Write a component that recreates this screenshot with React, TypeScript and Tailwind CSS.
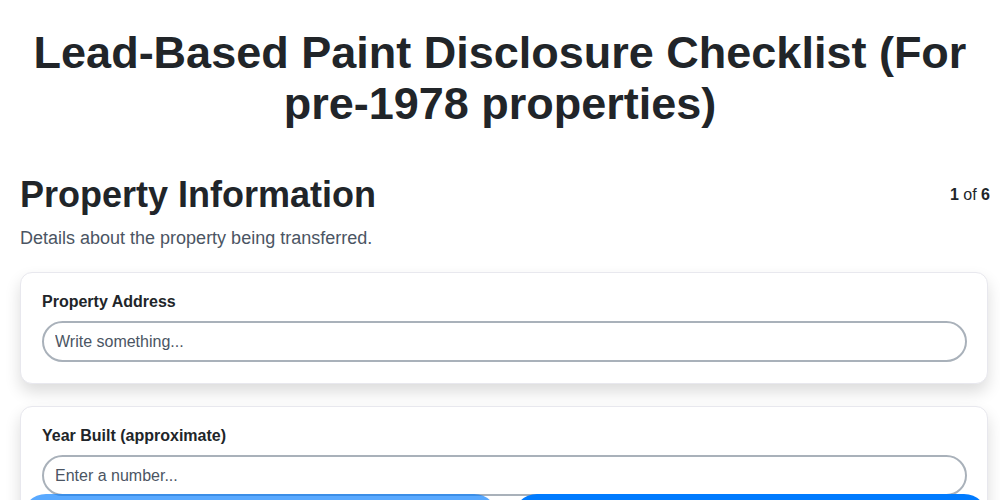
const fields = [
  { label: "Property Address", placeholder: "Write something...", type: "text" },
  { label: "Year Built (approximate)", placeholder: "Enter a number...", type: "number" },
];

export default function App() {
  return (
    <div className="min-h-screen bg-white text-[#212529] font-['Liberation_Sans',Arial,sans-serif]">
      <h1 className="pt-[27px] px-5 text-center text-[45px] leading-[51px] font-bold">
        Lead-Based Paint Disclosure Checklist (For pre-1978 properties)
      </h1>

      <div className="pl-5 pr-[10px] mt-[44px] pb-24">
        {/* Step header */}
        <div className="flex items-center justify-between">
          <h2 className="text-[36px] leading-[43px] font-bold">Property Information</h2>
          <p className="text-base leading-6">
            <span className="font-bold">1</span> of <span className="font-bold">6</span>
          </p>
        </div>
        <p className="mt-[9px] text-[18px] leading-[27px] text-[#4b5563]">
          Details about the property being transferred.
        </p>

        {/* Fields */}
        <div className="mt-[20px] mr-[2px] flex flex-col gap-[22px]">
          {fields.map((f) => (
            <div
              key={f.label}
              className="rounded-xl border border-[#e8e8ee] bg-white pl-[21px] pr-[20px] pt-[17px] pb-[21px] shadow-[0_8px_16px_rgba(0,0,0,0.14)]"
            >
              <label className="block text-base leading-6 font-bold mb-[7px]">{f.label}</label>
              <input
                type={f.type}
                placeholder={f.placeholder}
                className="block w-full h-[41px] rounded-full border-2 border-[#a9b1ba] bg-white px-[11px] text-base outline-none placeholder:text-[#4b5563]"
              />
            </div>
          ))}
        </div>
      </div>

      {/* Navigation */}
      <div className="fixed inset-x-0 bottom-[-42px] pl-[22px] pr-[12px] grid grid-cols-2 gap-[15px]">
        <button disabled className="h-12 rounded-full bg-[#007bff] opacity-65 text-white font-bold">
          Previous
        </button>
        <button className="h-12 rounded-full bg-[#007bff] text-white font-bold">Next</button>
      </div>
    </div>
  );
}
